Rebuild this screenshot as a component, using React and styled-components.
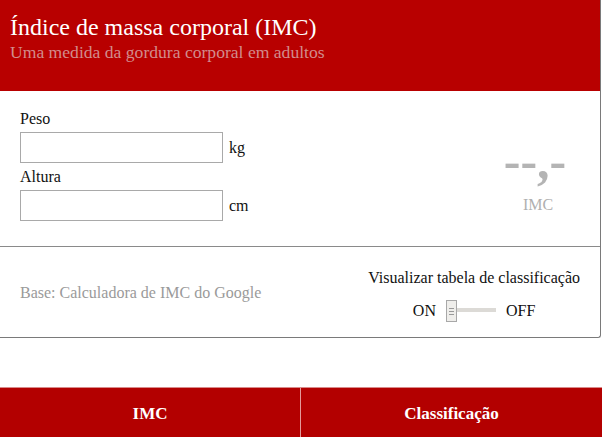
import React from "react";
import styled, { createGlobalStyle } from "styled-components";

const Global = createGlobalStyle`
  html, body { margin: 0; padding: 0; background: #fff; }
  body { width: 602px; height: 437px; overflow: hidden; }
`;

const serif = `"Liberation Serif", "Times New Roman", serif`;

const Page = styled.div`
  width: 602px;
  height: 437px;
  display: flex;
  flex-direction: column;
  justify-content: space-between;
  font-family: ${serif};
`;

const Card = styled.div`
  width: 600px;
  border-right: 1px solid #7a7a7a;
  border-bottom: 1px solid #7a7a7a;
  border-bottom-right-radius: 3px;
`;

const Header = styled.header`
  background: #b80000;
  height: 91px;
  padding: 13px 10px 0;
  box-sizing: border-box;
`;

const Title = styled.h1`
  margin: 0;
  font-family: ${serif};
  font-size: 24px;
  font-weight: normal;
  color: #fff;
  line-height: 28px;
`;

const Subtitle = styled.p`
  margin: 0;
  font-family: ${serif};
  font-size: 17.6px;
  color: #d28c8c;
  line-height: 22px;
`;

const Body = styled.section`
  display: flex;
  justify-content: space-between;
  align-items: center;
  height: 156px;
  box-sizing: border-box;
  padding: 18px 0 0 20px;
  border-bottom: 1px solid #8a8a8a;
`;

const Form = styled.div`
  display: flex;
  flex-direction: column;
  align-self: flex-start;
`;

const Label = styled.label`
  font-family: ${serif};
  font-size: 16px;
  line-height: 20px;
  color: #111;
  margin: ${(p) => p.$gap || 0}px 0 2px;
`;

const FieldRow = styled.div`
  display: flex;
  align-items: center;
  gap: 6px;
  font-family: ${serif};
  font-size: 16px;
  color: #111;
  padding-top: 1px;
`;

const Input = styled.input`
  width: 203px;
  height: 31px;
  box-sizing: border-box;
  border: 1px solid #a9a9a9;
  padding: 0 4px;
  font-family: ${serif};
  font-size: 16px;
  outline: none;
  margin: 0;
`;

const Result = styled.div`
  width: 124px;
  display: flex;
  flex-direction: column;
  align-items: center;
  margin-top: 0;
`;

const Value = styled.div`
  font-family: ${serif};
  font-size: 50px;
  font-weight: bold;
  line-height: 40px;
  color: #b4b4b4;
  margin-left: -6px;
`;

const ValueLabel = styled.div`
  font-family: ${serif};
  font-size: 16px;
  line-height: 20px;
  color: #b0b0b0;
  margin-top: 14px;
`;

const Footer = styled.section`
  display: flex;
  justify-content: space-between;
  align-items: center;
  height: 90px;
  padding: 0 20px 0 20px;
  box-sizing: border-box;
`;

const Source = styled.span`
  font-family: ${serif};
  font-size: 16px;
  color: #9a9a9a;
  margin-top: 2px;
`;

const ToggleBox = styled.div`
  display: flex;
  flex-direction: column;
  align-items: center;
  margin-top: 6px;
`;

const ToggleTitle = styled.div`
  font-family: ${serif};
  font-size: 16px;
  color: #111;
  line-height: 20px;
`;

const ToggleRow = styled.div`
  display: flex;
  align-items: center;
  margin-top: 12px;
  font-family: ${serif};
  font-size: 16px;
  color: #111;
`;

const Track = styled.div`
  position: relative;
  width: 50px;
  height: 22px;
  margin: 0 10px 0 10px;
  display: flex;
  align-items: center;
`;

const Line = styled.div`
  width: 100%;
  height: 4px;
  background: #dcdad6;
  margin-top: -3px;
`;

const Thumb = styled.div`
  position: absolute;
  left: 0;
  top: 0;
  width: 11px;
  height: 22px;
  box-sizing: border-box;
  border: 1px solid #a8a8a8;
  background: #efeeeb;
  display: flex;
  flex-direction: column;
  align-items: center;
  justify-content: center;
  gap: 2px;
`;

const Grip = styled.span`
  width: 5px;
  height: 1px;
  background: #999;
`;

const Nav = styled.nav`
  display: grid;
  grid-template-columns: 300px 1fr;
  height: 49px;
  background: #b30000;
  border-top: 1px solid #d98a8a;
`;

const NavItem = styled.div`
  display: flex;
  align-items: center;
  justify-content: center;
  color: #fff;
  font-family: ${serif};
  font-weight: bold;
  font-size: 17px;
  border-left: ${(p) => (p.$divider ? "1px solid #e39a9a" : "none")};
  padding-top: 2px;
`;

export default function App() {
  return (
    <>
      <Global />
      <Page>
        <Card>
          <Header>
            <Title>Índice de massa corporal (IMC)</Title>
            <Subtitle>Uma medida da gordura corporal em adultos</Subtitle>
          </Header>
          <Body>
            <Form>
              <Label>Peso</Label>
              <FieldRow>
                <Input />
                <span>kg</span>
              </FieldRow>
              <Label $gap={4}>Altura</Label>
              <FieldRow>
                <Input />
                <span>cm</span>
              </FieldRow>
            </Form>
            <Result>
              <Value>--,-</Value>
              <ValueLabel>IMC</ValueLabel>
            </Result>
          </Body>
          <Footer>
            <Source>Base: Calculadora de IMC do Google</Source>
            <ToggleBox>
              <ToggleTitle>Visualizar tabela de classificação</ToggleTitle>
              <ToggleRow>
                <span>ON</span>
                <Track>
                  <Line />
                  <Thumb>
                    <Grip />
                    <Grip />
                    <Grip />
                  </Thumb>
                </Track>
                <span>OFF</span>
              </ToggleRow>
            </ToggleBox>
          </Footer>
        </Card>
        <Nav>
          <NavItem>IMC</NavItem>
          <NavItem $divider>Classificação</NavItem>
        </Nav>
      </Page>
    </>
  );
}
